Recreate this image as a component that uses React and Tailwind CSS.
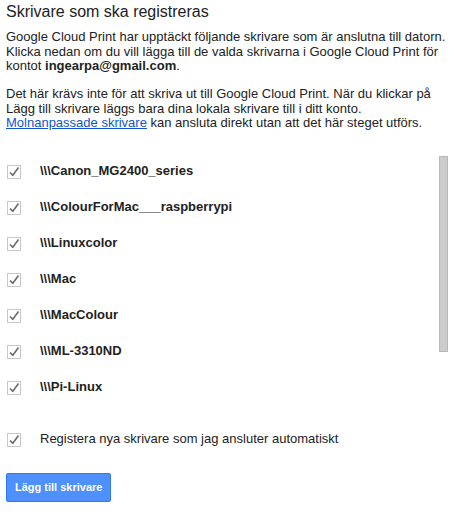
import React from 'react';

const printers = [
  '\\\\\\Canon_MG2400_series',
  '\\\\\\ColourForMac___raspberrypi',
  '\\\\\\Linuxcolor',
  '\\\\\\Mac',
  '\\\\\\MacColour',
  '\\\\\\ML-3310ND',
  '\\\\\\Pi-Linux',
];

const Check = () => (
  <svg width="14" height="14" viewBox="0 0 14 14" className="shrink-0">
    <rect x="0.5" y="0.5" width="13" height="13" fill="#fff" stroke="#c8c8c8" />
    <path d="M3 7.5 L5.8 10.2 L11.5 2.5" fill="none" stroke="#6b6b6b" strokeWidth="1.6" />
  </svg>
);

const App = () => {
  return (
    <div className="px-[6px] pt-[2px] text-[13px] leading-[14.5px] text-[#222] font-['Liberation_Sans',Arial,sans-serif]">
      <h1 className="text-[16px] leading-[20px] mb-[8px]">Skrivare som ska registreras</h1>

      <div>
        Google Cloud Print har upptäckt följande skrivare som är anslutna till datorn. Klicka nedan om du vill lägga till de valda skrivarna i Google Cloud Print för kontot <b>ingearpa@gmail.com</b>.
      </div>
      <div className="mt-[13.5px]">
        Det här krävs inte för att skriva ut till Google Cloud Print. När du klickar på Lägg till skrivare läggs bara dina lokala skrivare till i ditt konto.{' '}
        <a href="#" className="text-[#15c] underline">Molnanpassade skrivare</a> kan ansluta direkt utan att det här steget utförs.
      </div>

      <div className="flex mt-[23px]">
        <div className="flex-1 flex flex-col">
          {printers.map((p) => (
            <div key={p} className="flex items-center h-[36px]">
              <div className="pl-[1px] w-[34px]"><Check /></div>
              <span className="font-bold">{p}</span>
            </div>
          ))}
        </div>
        <div className="w-[9px] h-[196px] mt-[2px] mr-[7px] bg-[#cccccc] border border-[#b8b8b8]" />
      </div>

      <div className="flex items-center h-[36px] mt-[16px]">
        <div className="pl-[1px] w-[34px]"><Check /></div>
        <span>Registera nya skrivare som jag ansluter automatiskt</span>
      </div>

      <button className="mt-[15px] h-[29px] px-[8px] rounded-[2px] bg-[#4d90fe] border border-[#3079ed] text-white text-[11px] font-bold">
        Lägg till skrivare
      </button>
    </div>
  );
};

export default App;
